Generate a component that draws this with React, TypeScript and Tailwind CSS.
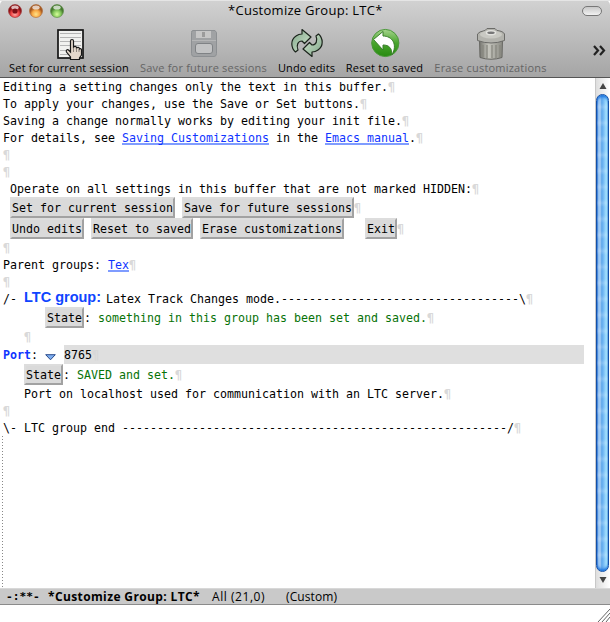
import type { ReactNode } from "react";

const UI = "font-['Open_Sans','Noto_Sans',sans-serif]";

function Eol() {
  return <span className="font-bold text-[#d9d9d9]">¶</span>;
}

function Line({ children, className = "h-[17px] leading-[18px]", eol = true }: { children?: ReactNode; className?: string; eol?: boolean }) {
  return (
    <div className={"flex whitespace-pre pl-[3px] " + className}>
      {children}
      {eol && <Eol />}
    </div>
  );
}

// A run of n blank character cells.
function Sp({ n = 1 }: { n?: number }) {
  return <span>{" ".repeat(n)}</span>;
}

function Link({ children }: { children: ReactNode }) {
  return <span className="h-[16px] border-b-2 border-[#7f9cff] text-[#0f35ff]">{children}</span>;
}

function Btn({ children }: { children: ReactNode }) {
  return (
    <span className="h-[21px] border-2 border-[#dddddd] border-r-[#a2a2a2] border-b-[#a2a2a2] bg-[#dadada] leading-[18px]">
      {children}
    </span>
  );
}

function Tool({ label, left, width, spacing, disabled, children }: { label: string; left: string; width: string; spacing: string; disabled?: boolean; children: ReactNode }) {
  return (
    <div className={"flex shrink-0 flex-col items-center " + left + " " + width}>
      <div className="h-[34px] pt-px pl-px">{children}</div>
      <div className={"whitespace-nowrap text-[11px] leading-[13px] " + spacing + (disabled ? " text-[#656565]" : " text-black")}>{label}</div>
    </div>
  );
}

function SetIcon() {
  return (
    <svg width="34" height="34" viewBox="0 0 34 34">
      <rect x="5" y="2" width="25" height="28" fill="#f1f1ef" stroke="#151515" strokeWidth="1.7" />
      <path d="M7 5.5h21M7 9.5h21M7 13.5h21M7 17.5h21M7 22.5h21M7 26.5h21" stroke="#b5b5b5" strokeWidth="1" />
      <path d="M17.5 13c0-2 3-2 3 0v6c1-1 3-1 3 1 1-1 3-1 3 1 1-1 2 0 2 1v5l-2 3v1.500h-9v-2.500l-4-5c-1-2 1-3 2-2l2 2z" fill="#e4d8cc" stroke="#171717" strokeWidth="1.2" />
      <path d="M20.5 20v4M23.500 20v4M26 21v3" stroke="#77716a" strokeWidth=".8" />
    </svg>
  );
}

function DiskIcon() {
  return (
    <svg width="34" height="34" viewBox="0 0 34 34">
      <path d="M6 2.500h22l1.500 2v21q0 3-2.500 3H7q-2.500 0-2.500-3V4.500q0-2 1.500-2z" fill="#a0a2a4" stroke="#8d9093" />
      <path d="M9 3h15v7H9z" fill="#c6c6c6" />
      <path d="M15 4h3v5h-3z" fill="#9b9b9b" />
      <rect x="8.500" y="15.500" width="17" height="10" rx="2.500" fill="#c2c3c4" stroke="#7f8285" />
      <path d="M5 12.500h24" stroke="#b5b6b7" />
    </svg>
  );
}

const ARROW = "M5.500 24C1 20 0 12 6 8c2-1.500 4-2 6-2V1.500L21 9l-6.500 6.500L12 13c-4 0-6 4-4 9z";

function RefreshIcon() {
  return (
    <svg width="34" height="34" viewBox="0 0 34 34">
      <defs>
        <linearGradient id="mint" x2="1" y2="1"><stop stopColor="#7fa588" /><stop offset="1" stopColor="#d5ead2" /></linearGradient>
      </defs>
      <g fill="url(#mint)" stroke="#1c241c" strokeWidth="1.2" strokeLinejoin="round">
        <path d={ARROW} />
        <path d={ARROW} transform="rotate(180 17 15)" />
      </g>
    </svg>
  );
}

function ResetIcon() {
  return (
    <svg width="34" height="34" viewBox="0 0 34 34">
      <defs>
        <linearGradient id="leaf" x2="0" y2="1"><stop stopColor="#a6d48d" /><stop offset=".5" stopColor="#49a52d" /><stop offset="1" stopColor="#278a10" /></linearGradient>
      </defs>
      <circle cx="17.300" cy="15" r="13.600" fill="url(#leaf)" stroke="#4b983a" />
      <path d="M5.500 11.500L15 3.500v4.500c9 0 15 8 9 19 0-7-3-10-9-10v5z" fill="#fff" stroke="#397d2b" />
    </svg>
  );
}

function TrashIcon() {
  return (
    <svg width="34" height="34" viewBox="0 0 34 34">
      <defs>
        <linearGradient id="can"><stop stopColor="#777771" /><stop offset=".4" stopColor="#c5c5bd" /><stop offset="1" stopColor="#8a8a83" /></linearGradient>
      </defs>
      <path d="M5.500 11h23l-.5 18.500q-11 3.500-22 0z" fill="url(#can)" stroke="#666661" />
      <path d="M9 17v12M13 17v13M18 17v13M22 17v13M26 17v12" stroke="#85857d" strokeWidth="1.200" />
      <path d="M3.500 6Q5 3.500 11 2.500l2-2h8l2 2q6 .5 7.500 3.500v6.500q-13.500 5-27 0z" fill="#b3b3ad" stroke="#6b6b68" />
      <ellipse cx="17" cy="6.500" rx="11" ry="4" fill="#c9c9c3" />
      <ellipse cx="17" cy="4.800" rx="4.500" ry="2" fill="#777" stroke="#e3e3df" strokeWidth="1.500" />
    </svg>
  );
}

function Lights() {
  const balls = [
    ["#8e1518", "#f04444", "#ffaba7"],
    ["#a55922", "#f7a744", "#ffe388"],
    ["#477b30", "#83c65b", "#d7ff9b"],
  ];
  return (
    <svg width="64" height="20" viewBox="0 0 64 20">
      {balls.map(([edge, mid, glow], i) => (
        <g key={edge}>
          <defs>
            <radialGradient id={"ball" + i} cy=".75"><stop stopColor={glow} /><stop offset=".6" stopColor={mid} /><stop offset="1" stopColor={edge} /></radialGradient>
          </defs>
          <circle cx={7 + i * 21} cy="10" r="6.500" fill={"url(#ball" + i + ")"} stroke={edge} strokeOpacity=".5" />
          <ellipse cx={7 + i * 21} cy="6.400" rx="3.700" ry="2" fill="#fff" fillOpacity=".7" />
        </g>
      ))}
      <circle cx="7" cy="10" r="2.600" fill="#7d1017" />
    </svg>
  );
}

export default function App() {
  return (
    <div className="flex h-[622px] w-[610px] flex-col overflow-hidden bg-white text-black">
      <header className={"flex h-[78px] flex-col rounded-t-[5px] border-b border-[#555] bg-linear-to-b from-[#d2d2d2] to-[#a5a5a5] " + UI}>
        <div className="grid h-[26px] grid-cols-[228px_154px_200px_20px] border-t border-[#e5e5e5]">
          <div className="pl-[8px]"><Lights /></div>
          <div className="whitespace-nowrap text-[13px] leading-[19px] tracking-[0.27px]">*Customize Group: LTC*</div>
          <div />
          <div className="mt-[5px] h-[10px] w-[20px] rounded-full border border-[#777] bg-linear-to-b from-[#c8c8c8] to-[#f2f2f2]" />
        </div>
        <div className="flex pt-[1px]">
          <Tool label="Set for current session" left="ml-[9px]" width="w-[120px]" spacing="tracking-[0.19px]"><SetIcon /></Tool>
          <Tool label="Save for future sessions" left="ml-[11px]" width="w-[127px]" spacing="tracking-[0.19px]" disabled><DiskIcon /></Tool>
          <Tool label="Undo edits" left="ml-[11px]" width="w-[57px]" spacing="tracking-[0.13px]"><RefreshIcon /></Tool>
          <Tool label="Reset to saved" left="ml-[11px]" width="w-[77px]" spacing="tracking-[0.23px]"><ResetIcon /></Tool>
          <Tool label="Erase customizations" left="ml-[11px]" width="w-[113px]" spacing="tracking-[0.2px]" disabled><TrashIcon /></Tool>
          <svg className="mt-[18px] ml-[45px]" width="16" height="12" viewBox="0 0 16 12"><path d="M2 1l4 4.500-4 4.500M8 1l4 4.500-4 4.500" fill="none" stroke="#222" strokeWidth="2.200" /></svg>
        </div>
      </header>
      <div className="flex h-[510px]">
        <main className="flex w-[595px] flex-col font-['DejaVu_Sans_Mono',monospace] text-[11.64px]">
          <Line>Editing a setting changes only the text in this buffer.</Line>
          <Line>To apply your changes, use the Save or Set buttons.</Line>
          <Line>Saving a change normally works by editing your init file.</Line>
          <Line>For details, see <Link>Saving Customizations</Link> in the <Link>Emacs manual</Link>.</Line>
          <Line />
          <Line />
          <Line>{" Operate on all settings in this buffer that are not marked HIDDEN:"}</Line>
          <Line className="h-[21px] leading-[22px]"><Sp /><Btn>Set for current session</Btn><Sp /><Btn>Save for future sessions</Btn></Line>
          <Line className="h-[21px] leading-[22px]"><Sp /><Btn>Undo edits</Btn><Sp /><Btn>Reset to saved</Btn><Sp /><Btn>Erase customizations</Btn><Sp n={3} /><Btn>Exit</Btn></Line>
          <Line />
          <Line>Parent groups: <Link>Tex</Link></Line>
          <Line />
          <Line>{"/- "}<span className="w-[82px] font-['Liberation_Sans',sans-serif] text-[14.5px] leading-[15px] font-bold text-[#0f45ff]">LTC group:</span>{"Latex Track Changes mode." + "-".repeat(34) + "\\"}</Line>
          <Line className="h-[21px] leading-[22px]"><Sp n={6} /><Btn>State</Btn>: <span className="text-[#077307]">something in this group has been set and saved.</span></Line>
          <Line><Sp n={3} /></Line>
          <Line className="h-[19px] leading-[20px]" eol={false}>
            <span className="font-bold text-[#0f35ff]">Port</span>{": "}
            <svg className="mt-[9px] mr-[8px]" width="11" height="7" viewBox="0 0 11 7"><path d="M.7.7h9.600L5.500 5.800z" fill="#7faff0" stroke="#294a8b" /></svg>
            <span className="w-[520px] bg-[#dfdfdf]">8765<span className="font-bold text-[#d8d8d8]">¶</span></span>
          </Line>
          <Line className="h-[21px] leading-[22px]"><Sp n={3} /><Btn>State</Btn>: <span className="text-[#077307]">SAVED and set.</span></Line>
          <Line>{"   Port on localhost used for communication with an LTC server."}</Line>
          <Line />
          <Line>{"\\- LTC group end " + "-".repeat(55) + "/"}</Line>
          <div className="ml-[2px] w-px flex-1 bg-[repeating-linear-gradient(to_bottom,#888_0_1px,transparent_1px_3px)]" />
        </main>
        <aside className="flex w-[15px] flex-col border-l border-[#c8c8c8] bg-linear-to-r from-[#dedede] to-white">
          <svg width="14" height="16" viewBox="0 0 14 16"><path d="M7 5l3.500 6h-7z" fill="#444" /></svg>
          <div className="h-[478px] w-[13px] rounded-full border border-[#1350a8] bg-[repeating-linear-gradient(to_bottom,#ffffff00_0_8px,#ffffff30_12px,#ffffff00_16px),linear-gradient(to_right,#3977d1_0%,#a6cdf5_15%,#8ec0f2_38%,#5ba6ea_42%,#78bcf6_60%,#aeeaff_90%,#78acd5_100%)] shadow-[inset_0_3px_3px_-1px_#1672df,inset_0_-3px_3px_-1px_#1672df]" />
          <svg width="14" height="16" viewBox="0 0 14 16"><path d="M7 11l3.500-6h-7z" fill="#444" /></svg>
        </aside>
      </div>
      <footer className={"flex h-[17px] whitespace-pre border-t border-b border-t-[#d8d8d8] border-b-[#8b8b8b] bg-[#c9c9c9] pl-[6px] text-[12px] leading-[15px] " + UI}>
        <span className="w-[42px] font-['DejaVu_Sans_Mono',monospace] text-[11.2px] font-bold">-:**-</span>
        <span className="w-[164px] font-bold tracking-[0.38px]">*Customize Group: LTC*</span>
        <span className="w-[74px] tracking-[0.55px]">All (21,0)</span>
        <span className="tracking-[0.1px]">(Custom)</span>
      </footer>
      <div className="flex flex-1 justify-end">
        <svg width="14" height="17" viewBox="0 0 14 17"><path d="M2 17L14 4M6 17l8-9M10 17l4-5" stroke="#666" strokeWidth="1" /></svg>
      </div>
    </div>
  );
}
